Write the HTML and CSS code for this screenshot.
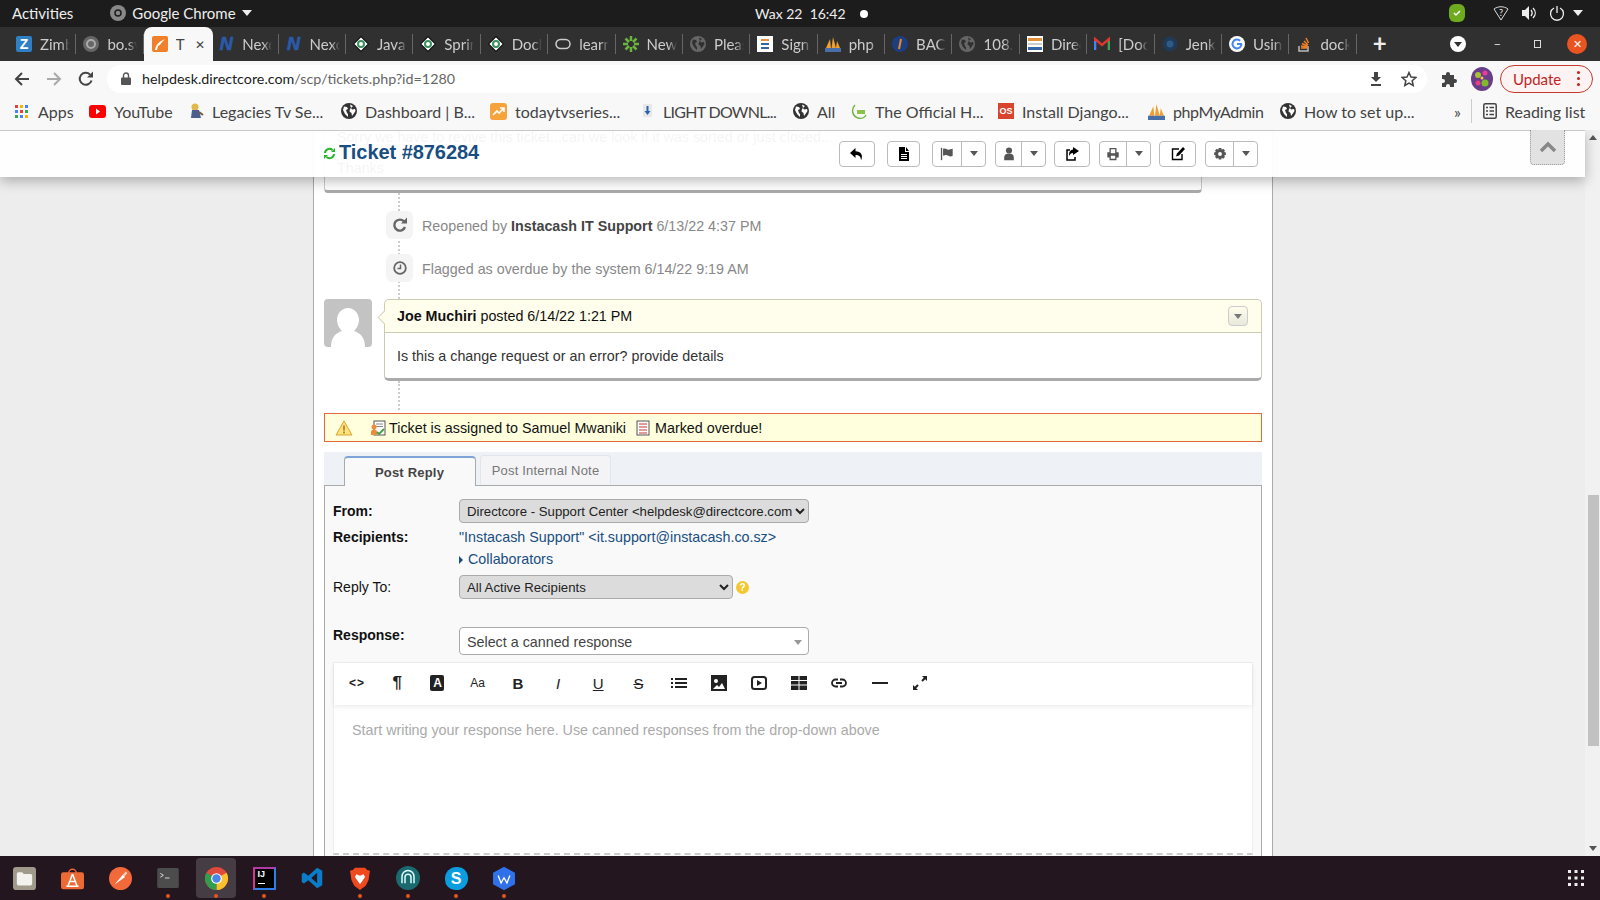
FILE: index.html
```html
<!DOCTYPE html>
<html lang="en">
<head>
  <meta charset="UTF-8">
  <title>Ticket #876284</title>
  <link rel="stylesheet" href="styles.css">
</head>
<body>
  <svg class="defs" width="0" height="0">
    <symbol id="i-globe" viewBox="0 0 16 16"><circle cx="8" cy="8" r="8"/><path style="fill: var(--land, #fff)" d="M3 3.500l3 .5 1 2-2 1 1 3 1 1v3L4 11 2 7zM9 1.500l3 1.500-2 2 1 1.500 3-.5.500 2-2 3-1.500 2-.5-3-2-1.500.5-2.500 1-1z"/></symbol>
    <symbol id="i-diamond" viewBox="0 0 16 16"><path fill="#fff" stroke="#111" stroke-width="1.200" d="M8 .5L15.500 8 8 15.500.5 8z"/><circle cx="8" cy="8" r="3" fill="none" stroke="#3d8f5f" stroke-width="2"/></symbol>
    <symbol id="i-pma" viewBox="0 0 16 16"><path fill="#f0a030" d="M1 12L5 3l1 9zM6.500 12L8 1l3 11zM11 12l1-7 3 7z"/><rect y="12" width="16" height="4" fill="#4a6ea8"/></symbol>
    <symbol id="i-reply" viewBox="0 0 16 16"><path d="M6.500 2L1 7l5.500 5V9c3.500 0 5.500 1.500 5.500 5.500C14.500 9 12 5.500 6.500 5.200z"/></symbol>
    <symbol id="i-doc" viewBox="0 0 16 16"><path fill-rule="evenodd" d="M3 1h6v5h4v9H3zM5 8v1h6V8zm0 2v1h6v-1zm0 2v1h6v-1z"/><path d="M10 1l3 4h-3z"/></symbol>
    <symbol id="i-flag" viewBox="0 0 16 16"><rect x="1" y="1" width="1.500" height="14"/><path d="M3.500 2c3-1 4 1 6 1s3-1 5-1v8c-2 1-3 1-5 0s-3-1-6 0z"/></symbol>
    <symbol id="i-user" viewBox="0 0 16 16"><circle cx="8" cy="4" r="3.500"/><path d="M2.500 15v-3c0-3 2-4.500 5.500-4.500s5.500 1.500 5.500 4.500v3z"/></symbol>
    <symbol id="i-share" viewBox="0 0 16 16"><path fill="none" stroke="currentColor" stroke-width="1.500" d="M6 4H3v10h8v-3"/><path d="M9 1l6 4-6 4V7c-2 0-3 1-4 3 0-4 1-6 4-6.500z"/></symbol>
    <symbol id="i-print" viewBox="0 0 16 16"><path fill-rule="evenodd" d="M4 1h8v5h2.500v6H12v3H4v-3H1.500V6H4zM5.500 2.500V7h5V2.500zM5.500 10v3.500h5V10z"/></symbol>
    <symbol id="i-edit" viewBox="0 0 16 16"><path fill="none" stroke="currentColor" stroke-width="1.400" d="M9 3H2.500v10.500H12V8"/><path d="M13 1l2 2-6 6.500-3 1 1-3z"/></symbol>
    <symbol id="i-cog" viewBox="0 0 16 16"><path fill-rule="evenodd" d="M6.500 1h3l.4 2 1.700-1 2.100 2.100-1 1.700 2 .4v3l-2 .4 1 1.700-2.100 2.100-1.700-1-.4 2h-3l-.4-2-1.700 1-2.100-2.100 1-1.700-2-.4v-3l2-.4-1-1.700L4.400 2l1.700 1zM8 5.800a2.200 2.200 0 100 4.400 2.200 2.200 0 000-4.400z"/></symbol>
  </svg>

  <div class="desktop">
    <header class="gnome-bar">
      <span class="activities">Activities</span>
      <span class="app-menu">
        <svg class="app-ico" width="16" height="16" viewBox="0 0 16 16"><circle cx="8" cy="8" r="8" fill="#888"/><circle cx="8" cy="8" r="3" fill="none" stroke="#1c1c1c" stroke-width="1.500"/></svg>
        Google Chrome <i class="caret-down"></i>
      </span>
      <span class="clock">Wax 22&nbsp;&nbsp;16:42 <i class="rec-dot"></i></span>
      <span class="tray">
        <svg class="tray-shield" width="16" height="20" viewBox="0 0 16 20"><rect y="1" width="16" height="18" rx="6" fill="#6eab1e"/><path d="M5 10l2 2 4-4" fill="none" stroke="#fff" stroke-width="1.500"/></svg>
        <svg class="tray-wifi" width="16" height="16" viewBox="0 0 16 16"><path d="M1 4c4-3 10-3 14 0L8 15z" fill="none" stroke="#ddd"/><text x="8" y="11" text-anchor="middle" font-size="9" fill="#eee">?</text></svg>
        <svg class="tray-vol" width="16" height="16" viewBox="0 0 16 16"><path d="M1 5h3l4-4v14l-4-4H1z" fill="#eee"/><path d="M10 5c1.500 2 1.500 4 0 6M12 3c3 3 3 7 0 10" fill="none" stroke="#eee" stroke-width="1.300"/></svg>
        <svg class="tray-power" width="16" height="16" viewBox="0 0 16 16"><path d="M5 3a6.500 6.500 0 106 0M8 1v7" fill="none" stroke="#eee" stroke-width="1.300"/></svg>
        <i class="caret-down"></i>
      </span>
    </header>

    <div class="tabstrip">
      <div class="tab"><span class="fav fav-zimbra">Z</span><span class="tab-title">Zimbra</span></div>
      <div class="tab"><svg class="fav" viewBox="0 0 16 16"><circle cx="8" cy="8" r="8" fill="#666"/><circle cx="8" cy="8" r="4" fill="none" stroke="#aaa" stroke-width="2"/></svg><span class="tab-title">bo.sw</span></div>
      <div class="tab tab-active"><svg class="fav" viewBox="0 0 16 16"><rect width="16" height="16" rx="2" fill="#f0802c"/><path d="M3 14c1-5 3-8 10-11-3 3-4 4-5 6l-2 1-1 4z" fill="#fff"/></svg><span class="tab-title">T</span><span class="tab-close">&#10005;</span></div>
      <div class="tab"><span class="fav fav-nexo">N</span><span class="tab-title">Nexo</span></div>
      <div class="tab"><span class="fav fav-nexo">N</span><span class="tab-title">Nexo</span></div>
      <div class="tab"><svg class="fav"><use href="#i-diamond"/></svg><span class="tab-title">Java</span></div>
      <div class="tab"><svg class="fav"><use href="#i-diamond"/></svg><span class="tab-title">Sprin</span></div>
      <div class="tab"><svg class="fav"><use href="#i-diamond"/></svg><span class="tab-title">Docl</span></div>
      <div class="tab"><svg class="fav" viewBox="0 0 16 16"><rect x="1" y="3.500" width="14" height="9" rx="4.500" fill="none" stroke="#ccc" stroke-width="1.500"/></svg><span class="tab-title">learn</span></div>
      <div class="tab"><svg class="fav" viewBox="0 0 16 16"><path d="M8 0v5M8 11v5M0 8h5M11 8h5M2.500 2.500L6 6M10 10l3.500 3.500M13.500 2.500L10 6M6 10l-3.500 3.500" stroke="#6cb33f" stroke-width="2.500"/></svg><span class="tab-title">New</span></div>
      <div class="tab"><svg class="fav fav-gray"><use href="#i-globe"/></svg><span class="tab-title">Pleas</span></div>
      <div class="tab"><svg class="fav" viewBox="0 0 16 16"><rect width="16" height="16" fill="#fff"/><path d="M4 4h8" stroke="#e69138" stroke-width="2"/><path d="M4 8h8M4 12h8" stroke="#3367a5" stroke-width="2"/></svg><span class="tab-title">Sign</span></div>
      <div class="tab"><svg class="fav"><use href="#i-pma"/></svg><span class="tab-title">php</span></div>
      <div class="tab"><svg class="fav" viewBox="0 0 16 16"><circle cx="8" cy="8" r="8" fill="#1d3f80"/><path d="M9 3L7 13" stroke="#e8872b" stroke-width="2"/></svg><span class="tab-title">BAC</span></div>
      <div class="tab"><svg class="fav fav-gray"><use href="#i-globe"/></svg><span class="tab-title">108.1</span></div>
      <div class="tab"><svg class="fav" viewBox="0 0 16 16"><rect width="16" height="16" fill="#fff"/><rect x="1" y="2" width="14" height="3" fill="#e69138"/><rect x="1" y="7" width="14" height="2" fill="#ccc"/><rect x="1" y="11" width="14" height="3" fill="#3367a5"/></svg><span class="tab-title">Direc</span></div>
      <div class="tab"><svg class="fav" viewBox="0 0 16 16"><path d="M1 14V3l7 6 7-6v11" fill="none" stroke="#e3352b" stroke-width="2.400"/><path d="M1 14V5" stroke="#4285f4" stroke-width="2.400"/><path d="M15 14V5" stroke="#34a853" stroke-width="2.400"/></svg><span class="tab-title">[Doc</span></div>
      <div class="tab"><svg class="fav" viewBox="0 0 16 16"><circle cx="8" cy="8" r="7.500" fill="#203a56"/><circle cx="8" cy="8" r="3.500" fill="#2e5a86"/></svg><span class="tab-title">Jenk</span></div>
      <div class="tab"><svg class="fav" viewBox="0 0 16 16"><circle cx="8" cy="8" r="8" fill="#fff"/><path d="M12.500 8a4.500 4.500 0 11-1.300-3.200" fill="none" stroke="#4285f4" stroke-width="2"/><path d="M8 8h5" stroke="#4285f4" stroke-width="2"/></svg><span class="tab-title">Usin</span></div>
      <div class="tab"><svg class="fav" viewBox="0 0 16 16"><path d="M3 10v5h9v-5" fill="none" stroke="#bbb" stroke-width="1.500"/><path d="M5 12h6M5 10l6 1M6 7.500l5.500 2.500M8 5l4 4M10 2l2.500 5" stroke="#f48024" stroke-width="1.500"/></svg><span class="tab-title">dock</span></div>
      <span class="new-tab">+</span>
      <span class="win-controls">
        <span class="tab-search"><i></i></span>
        <span class="win-btn">&#8211;</span>
        <span class="win-restore"></span>
        <span class="win-close">&#10005;</span>
      </span>
    </div>

    <div class="toolbar">
      <svg class="nav-ico" width="16" height="16" viewBox="0 0 16 16"><path d="M15 8H2M8 2L2 8l6 6" fill="none" stroke="#444" stroke-width="2"/></svg>
      <svg class="nav-ico nav-off" width="16" height="16" viewBox="0 0 16 16"><path d="M1 8h13M8 2l6 6-6 6" fill="none" stroke="#aaa" stroke-width="2"/></svg>
      <svg class="nav-ico" width="16" height="16" viewBox="0 0 16 16"><path d="M13.500 9.500A6 6 0 1112 3.500" fill="none" stroke="#444" stroke-width="2"/><path d="M9 6.500h6v-6z" fill="#444"/></svg>
      <div class="omnibox">
        <svg class="lock" width="10" height="13" viewBox="0 0 10 13"><path d="M2.500 6V3.500a2.500 2.500 0 015 0V6" fill="none" stroke="#555" stroke-width="1.400"/><rect y="5.500" width="10" height="7.500" rx="1" fill="#555"/></svg>
        <span class="url"><b>helpdesk.directcore.com</b>/scp/tickets.php?id=1280</span>
        <svg class="omni-ico" width="14" height="14" viewBox="0 0 14 14"><path d="M5 0h4v5h3L7 10 2 5h3zM2 12h10v2H2z" fill="#444"/></svg>
        <svg class="omni-ico" width="16" height="16" viewBox="0 0 16 16"><path d="M8 1.500l2 4.500 4.800.5-3.600 3.200 1 4.800L8 12.100l-4.200 2.400 1-4.800L1.200 6.500 6 6z" fill="none" stroke="#444" stroke-width="1.500"/></svg>
      </div>
      <svg class="puzzle" width="16" height="16" viewBox="0 0 16 16"><path d="M1 4h4V3a2 2 0 014 0v1h4v4h1a2 2 0 010 4h-1v4H9v-1a2 2 0 00-4 0v1H1v-4h1a2 2 0 000-4H1z" fill="#444"/></svg>
      <svg class="profile" width="22" height="24" viewBox="0 0 22 24"><ellipse cx="11" cy="12" rx="11" ry="12" fill="#6a3d8a"/><circle cx="7" cy="8" r="3" fill="#a5c22f"/><circle cx="14" cy="6" r="2.500" fill="#e83d9a"/><circle cx="14" cy="16" r="3.500" fill="#7fb92c"/><circle cx="7" cy="16" r="2.500" fill="#e5417f"/><circle cx="11" cy="11" r="1.500" fill="#f0d040"/></svg>
      <div class="update-pill"><span>Update</span><i class="kebab"></i></div>
    </div>

    <nav class="bookmarks">
      <span class="bm bm-apps"><svg class="bm-ico" width="13" height="13" viewBox="0 0 13 13"><path d="M0 0h3v3H0z" fill="#e34133"/><path d="M5 0h3v3H5z" fill="#f4b400"/><path d="M10 0h3v3h-3z" fill="#4285f4"/><path d="M0 5h3v3H0z" fill="#4285f4"/><path d="M5 5h3v3H5z" fill="#e34133"/><path d="M10 5h3v3h-3z" fill="#34a853"/><path d="M0 10h3v3H0z" fill="#34a853"/><path d="M5 10h3v3H5z" fill="#4285f4"/><path d="M10 10h3v3h-3z" fill="#f4b400"/></svg>Apps</span>
      <span class="bm bm-yt"><svg class="bm-ico" width="17" height="13" viewBox="0 0 17 13"><rect width="17" height="13" rx="3" fill="#f00"/><path d="M7 3.500l4 3-4 3z" fill="#fff"/></svg>YouTube</span>
      <span class="bm bm-leg"><svg class="bm-ico" width="16" height="16" viewBox="0 0 16 16"><circle cx="7" cy="4" r="3.500" fill="#e0b84a"/><path d="M4 7h7l2 8H3z" fill="#4a5f8f"/><path d="M11 9l4 3" stroke="#7a5a3a" stroke-width="2"/></svg>Legacies Tv Se...</span>
      <span class="bm bm-dash"><svg class="bm-ico bm-globe" width="16" height="16"><use href="#i-globe"/></svg>Dashboard | B...</span>
      <span class="bm bm-today"><svg class="bm-ico" width="17" height="17" viewBox="0 0 17 17"><rect width="17" height="17" rx="3" fill="#f5a33a"/><path d="M3 12l4-4 2 2 5-5M10 5h4v4" fill="none" stroke="#fff" stroke-width="1.600"/></svg>todaytvseries...</span>
      <span class="bm bm-light"><svg class="bm-ico" width="15" height="16" viewBox="0 0 15 16"><rect x="3" y="1" width="9" height="13" rx="1" fill="#e8e8e8"/><path d="M6.500 3h2v5h2l-3 4-3-4h2z" fill="#2a64b0"/></svg>LIGHT DOWNL...</span>
      <span class="bm bm-all"><svg class="bm-ico bm-globe" width="16" height="16"><use href="#i-globe"/></svg>All</span>
      <span class="bm bm-yts"><svg class="bm-ico" width="16" height="16" viewBox="0 0 16 16"><path d="M4 2C0 6 1 13 7 15c4 1 7-1 8-3" fill="none" stroke="#6cb33f" stroke-width="1.400"/><path d="M6 7h8v4H6z" fill="#8cc24a"/></svg>The Official H...</span>
      <span class="bm bm-os"><span class="bm-ico bm-osbox">OS</span>Install Django...</span>
      <span class="bm bm-pma"><svg class="bm-ico" width="17" height="17"><use href="#i-pma"/></svg>phpMyAdmin</span>
      <span class="bm bm-how"><svg class="bm-ico bm-globe" width="16" height="16"><use href="#i-globe"/></svg>How to set up...</span>
      <span class="bm-more">&raquo;</span>
      <span class="bm bm-read"><svg class="bm-ico" width="14" height="16" viewBox="0 0 14 16"><rect x=".8" y=".8" width="12.400" height="14.400" rx="1.500" fill="none" stroke="#444" stroke-width="1.500"/><path d="M3 4.500h2M3 8h2M3 11.500h2M6.500 4.500h4.500M6.500 8h4.500M6.500 11.500h4.500" stroke="#444" stroke-width="1.300"/></svg>Reading list</span>
    </nav>

    <main class="viewport">
      <div class="page">
        <div class="content">
          <div class="prev-card">
            <p>Sorry we have to revive this ticket...can we look if it was sorted or just closed...</p>
            <p>Thanks</p>
          </div>

          <div class="events">
            <div class="event">
              <span class="event-ico"><svg width="16" height="16" viewBox="0 0 16 16"><path d="M13 10a5.500 5.500 0 11-1-5.500" fill="none" stroke="#666" stroke-width="2.400"/><path d="M9 6.500h6v-6z" fill="#666"/></svg></span>
              <span class="event-text">Reopened by <b>Instacash IT Support</b> 6/13/22 4:37 PM</span>
            </div>
            <div class="event">
              <span class="event-ico"><svg width="14" height="14" viewBox="0 0 14 14"><circle cx="7" cy="7" r="5.800" fill="none" stroke="#666" stroke-width="1.800"/><path d="M7.500 3.500v4H4.500" fill="none" stroke="#666" stroke-width="1.500"/></svg></span>
              <span class="event-text">Flagged as overdue by the system 6/14/22 9:19 AM</span>
            </div>
          </div>

          <div class="entry">
            <svg class="avatar" width="48" height="48" viewBox="0 0 48 48"><rect width="48" height="48" rx="4" fill="#c3c3c3"/><path d="M24 9c6 0 11 5 11 12 0 5-3 9-5 11 6 2 11 6 11 16H7c0-10 5-14 11-16-2-2-5-6-5-11 0-7 5-12 11-12z" fill="#fff"/></svg>
            <div class="entry-card">
              <div class="entry-head">
                <span><b>Joe Muchiri</b> posted 6/14/22 1:21 PM</span>
                <span class="entry-menu"><i></i></span>
              </div>
              <div class="entry-body">Is this a change request or an error? provide details</div>
            </div>
          </div>
          <div class="connector"></div>

          <div class="notice">
            <svg class="notice-warn" width="18" height="16" viewBox="0 0 18 16"><path d="M9 1l8 14H1z" fill="#fbe27a" stroke="#d9a43a"/><path d="M9 5.500v5M9 11.500v2" stroke="#a8741a" stroke-width="1.500"/></svg>
            <svg class="notice-ico" width="16" height="16" viewBox="0 0 16 16"><rect x="4" y="1" width="11" height="14" fill="#fff" stroke="#555"/><path d="M6 4h7M6 6.500h7" stroke="#888"/><circle cx="4" cy="7" r="2.500" fill="#ee8a3c"/><path d="M1 15v-3c0-1.500 1-2.500 3-2.500s3 1 3 2.500v3z" fill="#ee8a3c"/><path d="M7 12l2 2 5-5" fill="none" stroke="#3fa142" stroke-width="1.800"/></svg>
            <span>Ticket is assigned to Samuel Mwaniki</span>
            <svg class="notice-ico notice-ico2" width="14" height="16" viewBox="0 0 14 16"><rect x="1" y="1" width="12" height="14" fill="#fff" stroke="#555"/><path d="M3 4h8M3 7h8M3 10h8M3 13h8" stroke="#c0392b"/></svg>
            <span>Marked overdue!</span>
          </div>

          <div class="reply-tabs">
            <span class="reply-tab reply-tab-on">Post Reply</span>
            <span class="reply-tab">Post Internal Note</span>
          </div>

          <form class="reply-form">
            <div class="row row-from">
              <label class="lbl"><b>From:</b></label>
              <select class="sel sel-from"><option>Directcore - Support Center &lt;helpdesk@directcore.com</option></select>
            </div>
            <div class="row row-rcpt">
              <label class="lbl"><b>Recipients:</b></label>
              <a class="link">"Instacash Support" &lt;it.support@instacash.co.sz&gt;</a>
            </div>
            <div class="row row-collab">
              <span class="lbl"></span>
              <a class="link"><i class="caret-right"></i>Collaborators</a>
            </div>
            <div class="row row-replyto">
              <label class="lbl">Reply To:</label>
              <select class="sel sel-reply"><option>All Active Recipients</option></select>
              <span class="help-dot">?</span>
            </div>
            <div class="row row-response">
              <label class="lbl"><b>Response:</b></label>
              <div class="canned">Select a canned response<i></i></div>
            </div>

            <div class="editor">
              <div class="editor-bar">
                <span class="ed-btn ed-code">&lt;&gt;</span>
                <span class="ed-btn ed-para">&para;</span>
                <span class="ed-btn"><span class="ed-a">A</span></span>
                <span class="ed-btn ed-aa">Aa</span>
                <span class="ed-btn ed-b">B</span>
                <span class="ed-btn ed-i">I</span>
                <span class="ed-btn ed-u">U</span>
                <span class="ed-btn ed-s">S</span>
                <span class="ed-btn"><svg width="16" height="12" viewBox="0 0 16 12"><path d="M0 1h2v2H0zM4 1h12v2H4zM0 5h2v2H0zM4 5h12v2H4zM0 9h2v2H0zM4 9h12v2H4z" fill="#222"/></svg></span>
                <span class="ed-btn"><svg width="16" height="16" viewBox="0 0 16 16"><rect width="16" height="16" fill="#222"/><circle cx="5" cy="6" r="2" fill="#fff"/><path d="M2 14l4-4 2 2 3-4 3 6z" fill="#fff"/></svg></span>
                <span class="ed-btn"><svg width="16" height="14" viewBox="0 0 16 14"><rect x="1" y="1" width="14" height="12" rx="2.500" fill="none" stroke="#222" stroke-width="2"/><path d="M6 4l5 3-5 3z" fill="#222"/></svg></span>
                <span class="ed-btn"><svg width="16" height="14" viewBox="0 0 16 14"><path d="M0 0h16v14H0z" fill="#222"/><path d="M0 4.500h16M0 9h16M8 0v14" stroke="#fff"/></svg></span>
                <span class="ed-btn"><svg width="16" height="10" viewBox="0 0 16 10"><path d="M7 1.500H4.500a3.500 3.500 0 000 7H7M9 1.500h2.500a3.500 3.500 0 010 7H9M5 5h6" fill="none" stroke="#222" stroke-width="1.800"/></svg></span>
                <span class="ed-btn"><svg width="16" height="2" viewBox="0 0 16 2"><rect width="16" height="2" fill="#222"/></svg></span>
                <span class="ed-btn"><svg width="16" height="16" viewBox="0 0 16 16"><path d="M10 1h5v5l-1.800-1.800-2.500 2.500-1.400-1.400 2.500-2.500zM6 15H1v-5l1.800 1.800 2.500-2.500 1.400 1.400-2.500 2.500z" fill="#222"/></svg></span>
              </div>
              <div class="editor-body">Start writing your response here. Use canned responses from the drop-down above</div>
            </div>
          </form>
        </div>
      </div>

      <div class="scrollbar">
        <i class="sb-up"></i>
        <div class="sb-thumb"></div>
        <i class="sb-down"></i>
      </div>

      <!-- sticky ticket header sits over the scrolled page -->
      <div class="sticky-head">
        <svg class="refresh" width="13" height="13" viewBox="0 0 13 13"><path d="M2 6a4.500 4.500 0 017.500-3M11 7a4.500 4.500 0 01-7.500 3" fill="none" stroke="#27b327" stroke-width="2"/><path d="M8 5h4V1zM5 8H1v4z" fill="#27b327"/></svg>
        <h1 class="ticket-no">Ticket #876284</h1>
        <div class="actions">
          <span class="act act-reply"><svg width="16" height="16"><use href="#i-reply"/></svg></span>
          <span class="act act-doc"><svg width="16" height="16"><use href="#i-doc"/></svg></span>
          <span class="act act-split act-flag"><span class="act-main act-gray"><svg width="14" height="14"><use href="#i-flag"/></svg></span><span class="act-more"><i></i></span></span>
          <span class="act act-split act-user"><span class="act-main act-gray"><svg width="14" height="14"><use href="#i-user"/></svg></span><span class="act-more"><i></i></span></span>
          <span class="act act-share"><svg width="16" height="16"><use href="#i-share"/></svg></span>
          <span class="act act-split act-print"><span class="act-main act-gray"><svg width="14" height="14"><use href="#i-print"/></svg></span><span class="act-more"><i></i></span></span>
          <span class="act act-edit"><svg width="16" height="16"><use href="#i-edit"/></svg></span>
          <span class="act act-split act-cog"><span class="act-main act-gray"><svg width="14" height="14"><use href="#i-cog"/></svg></span><span class="act-more"><i></i></span></span>
        </div>
        <span class="to-top"><svg width="18" height="12" viewBox="0 0 18 12"><path d="M2 10l7-7 7 7" fill="none" stroke="#888" stroke-width="3.500"/></svg></span>
      </div>
    </main>

    <footer class="dock">
      <span class="dock-app"><svg width="23" height="23" viewBox="0 0 30 30"><rect width="30" height="30" rx="4" fill="#a09a8c"/><path d="M5 9c0-1 1-2 2-2h5l2 2h9c1 0 2 1 2 2v11c0 1-1 2-2 2H7c-1 0-2-1-2-2z" fill="#f4f2ee"/></svg></span>
      <span class="dock-app"><svg width="23" height="23" viewBox="0 0 30 30"><path d="M10 8a5 5 0 0110 0" fill="none" stroke="#f0632c" stroke-width="2"/><rect y="7" width="30" height="22" rx="3" fill="#ee6a34"/><path d="M15 9l-6 16M15 9l6 16M11 19h8M7 25h16" stroke="#fff" stroke-width="2" fill="none"/></svg></span>
      <span class="dock-app"><svg width="23" height="23" viewBox="0 0 30 30"><circle cx="15" cy="15" r="15" fill="#f36a3a"/><path d="M7 23l11-13 3 3z" fill="#fff"/><path d="M18 10l4-4 2 2-4 4z" fill="#fbd3c2"/></svg></span>
      <span class="dock-app has-dot"><svg width="22" height="20" viewBox="0 0 28 26"><rect width="28" height="26" rx="2" fill="#4c4c4c"/><path d="M4 7l4 2.500L4 12" fill="none" stroke="#fff"/><path d="M10 13h6" stroke="#fff"/></svg></span>
      <span class="dock-app dock-active has-dot"><svg width="23" height="23" viewBox="0 0 30 30"><circle cx="15" cy="15" r="15" fill="#e04a3a"/><path d="M15 15l13-7.500A15 15 0 0115 30z" fill="#fbc02d"/><path d="M15 15L2 22.500A15 15 0 0015 30z" fill="#2f9e4f"/><path d="M15 15L2 22.500A15 15 0 012 7.500z" fill="#2f9e4f"/><circle cx="15" cy="15" r="7" fill="#fff"/><circle cx="15" cy="15" r="5.500" fill="#4a86e8"/></svg></span>
      <span class="dock-app has-dot"><span class="ij-box"><b>IJ</b><i></i></span></span>
      <span class="dock-app"><svg width="22" height="22" viewBox="0 0 30 30"><path d="M22 1l7 4v20l-7 4-12-11-6 4.500-3-2v-11l3-2 6 4.500z" fill="#0a7cc8"/><path d="M22 8v14l-8-7z" fill="#23161f"/></svg></span>
      <span class="dock-app has-dot"><svg width="20" height="25" viewBox="0 0 28 32"><path d="M7 1h14l3 3 4 1-2 13-4 8-8 6-8-6-4-8L0 5l4-1z" fill="#f1491f"/><path d="M9 10l5 2 5-2 2 4-4 6-3 4-3-4-4-6z" fill="#fff"/></svg></span>
      <span class="dock-app has-dot"><svg width="24" height="24" viewBox="0 0 32 32"><circle cx="16" cy="16" r="16" fill="#1b6a70"/><path d="M8 23v-9a8 8 0 0116 0v9M12 15a4 4 0 018 0v8M12 15v8" fill="none" stroke="#dff" stroke-width="2"/></svg></span>
      <span class="dock-app has-dot"><span class="skype-box">S</span></span>
      <span class="dock-app has-dot"><svg width="22" height="25" viewBox="0 0 30 32"><path d="M15 0l15 8v16l-15 8-15-8V8z" fill="#2f71e8"/><path d="M7 12l4 10 4-7 4 7 4-10" fill="none" stroke="#fff" stroke-width="1.800"/></svg></span>
      <svg class="app-grid" width="16" height="16" viewBox="0 0 16 16"><path d="M0 0h3v3H0zM6.500 0h3v3h-3zM13 0h3v3h-3zM0 6.500h3v3H0zM6.500 6.500h3v3h-3zM13 6.500h3v3h-3zM0 13h3v3H0zM6.500 13h3v3h-3zM13 13h3v3h-3z" fill="#eee"/></svg>
    </footer>
  </div>
</body>
</html>
```

FILE: styles.css
```css
* {
  box-sizing: border-box;
}

body {
  margin: 0;
  overflow: hidden;
  font-family: "Liberation Sans", sans-serif;
  font-size: 14.3px;
}

.defs {
  position: absolute;
}

.desktop {
  width: 1600px;
  height: 900px;
  display: flex;
  flex-direction: column;
  overflow: hidden;
}

/* gnome top bar */
.gnome-bar {
  height: 27px;
  flex: none;
  background: #1c1c1c;
  color: #eee;
  font-family: Lato, sans-serif;
  font-size: 15px;
  display: flex;
  align-items: center;
  padding: 0 0 1px 12px;
  position: relative;
}

.app-menu {
  margin-left: 37px;
  display: flex;
  align-items: center;
}

.app-ico {
  margin-right: 6px;
}

.caret-down {
  display: inline-block;
  width: 0;
  height: 0;
  border-left: 5px solid transparent;
  border-right: 5px solid transparent;
  border-top: 6px solid #eee;
  margin-left: 6px;
}

.clock {
  position: absolute;
  left: 755px;
  font-size: 14px;
}

.rec-dot {
  display: inline-block;
  width: 8px;
  height: 8px;
  border-radius: 50%;
  background: #fff;
  margin-left: 11px;
  vertical-align: 1px;
}

.tray {
  margin-left: auto;
  display: flex;
  align-items: center;
  padding-right: 17px;
}

.tray-wifi,
.tray-vol,
.tray-power {
  margin-left: 12px;
}

.tray-wifi {
  margin-left: 28px;
}

.tray .caret-down {
  margin-left: 8px;
}

/* tabs */
.tabstrip {
  height: 34px;
  flex: none;
  background: #303030;
  color: #ccc;
  font-family: Lato, sans-serif;
  font-size: 15px;
  display: flex;
  align-items: stretch;
  padding-left: 9px;
}

.tab {
  width: 67.4px;
  flex: none;
  display: flex;
  align-items: center;
  padding-left: 7px;
  position: relative;
}

.tab::after {
  content: "";
  position: absolute;
  right: 0;
  top: 7px;
  bottom: 7px;
  width: 1px;
  background: #666;
}

.tab-active {
  width: 69px;
  margin-right: -1.6px;
  padding-left: 8px;
  background: #f8f8f8;
  color: #444;
  border-radius: 8px 8px 0 0;
}

.tab-active::after {
  display: none;
}

.fav {
  width: 16px;
  height: 16px;
  flex: none;
  display: inline-block;
}

.fav-gray {
  --land: #303030;
  color: #666;
  fill: #666;
}

.fav-zimbra {
  background: #2f7fc4;
  color: #fff;
  font: bold 14px/16px "Liberation Sans", sans-serif;
  text-align: center;
  border-radius: 2px;
}

.fav-nexo {
  color: #2a5aa8;
  font: italic bold 18px/16px "Liberation Sans", sans-serif;
  -webkit-text-stroke: .7px #2a5aa8;
  text-align: center;
}

.tab-title {
  margin-left: 8px;
  width: 30px;
  overflow: hidden;
  white-space: nowrap;
  -webkit-mask-image: linear-gradient(to right, #000 70%, transparent);
  mask-image: linear-gradient(to right, #000 70%, transparent);
}

.tab-active .tab-title {
  width: 12px;
  -webkit-mask-image: none;
  mask-image: none;
}

.tab-close {
  margin-left: 7px;
  font-size: 12px;
  color: #444;
}

.new-tab {
  margin-left: 16px;
  color: #eee;
  font-size: 24px;
  line-height: 32px;
  font-weight: 700;
}

.win-controls {
  margin-left: auto;
  display: flex;
  align-items: center;
  color: #ddd;
}

.tab-search {
  width: 16px;
  height: 16px;
  border-radius: 50%;
  background: #fff;
  display: flex;
  align-items: center;
  justify-content: center;
  margin-right: 27px;
}

.tab-search i {
  border-left: 4px solid transparent;
  border-right: 4px solid transparent;
  border-top: 5px solid #303030;
}

.win-btn {
  font-size: 13px;
  margin-right: 33px;
}

.win-restore {
  width: 7px;
  height: 8px;
  border: 1px solid #ddd;
  margin-right: 26px;
}

.win-close {
  width: 20px;
  height: 20px;
  border-radius: 50%;
  background: #e95420;
  color: #fff;
  font-size: 11px;
  line-height: 20px;
  text-align: center;
  margin-right: 13px;
}

/* address bar */
.toolbar {
  height: 35px;
  flex: none;
  background: #f8f8f8;
  display: flex;
  align-items: center;
  padding-left: 14px;
  font-family: Lato, sans-serif;
}

.nav-ico {
  margin-right: 16px;
}

.omnibox {
  width: 1320px;
  margin-left: -3px;
  height: 28px;
  border-radius: 14px;
  background: #fff;
  display: flex;
  align-items: center;
  padding-left: 14px;
}

.lock {
  margin-right: 11px;
}

.url {
  font-size: 14.3px;
  color: #666;
  flex: 1;
}

.url b {
  font-weight: 400;
  color: #222;
}

.omni-ico {
  margin-right: 18px;
}

.omni-ico:last-child {
  margin-right: 10px;
}

.puzzle {
  margin-left: 14px;
}

.profile {
  margin-left: 14px;
}

.update-pill {
  margin-left: 7px;
  width: 93px;
  height: 28px;
  border: 1px solid #c5392f;
  border-radius: 14px;
  background: #fdf3f2;
  color: #c5221f;
  font-size: 15px;
  display: flex;
  align-items: center;
  padding-left: 12px;
}

.kebab {
  margin-left: auto;
  margin-right: 12px;
  width: 3px;
  height: 3px;
  border-radius: 50%;
  background: #c5221f;
  box-shadow: 0 -6px 0 #c5221f, 0 6px 0 #c5221f;
}

/* bookmarks */
.bookmarks {
  height: 34px;
  flex: none;
  background: #f8f8f8;
  color: #444;
  font-family: Lato, sans-serif;
  font-size: 16px;
  display: flex;
  align-items: center;
  padding: 0 0 4px 15px;
}

.bm {
  display: flex;
  align-items: center;
  flex: none;
  white-space: nowrap;
}

.bm-ico {
  margin-right: 8px;
  flex: none;
}

.bm-globe {
  fill: #333;
}

.bm-apps { width: 74px; }
.bm-apps .bm-ico { margin-right: 10px; }
.bm-yt { width: 99px; }
.bm-leg { width: 153px; }
.bm-dash { width: 149px; }
.bm-today { width: 150px; }
.bm-light { width: 153px; letter-spacing: -.7px; }
.bm-all { width: 58px; }
.bm-yts { width: 147px; }
.bm-os { width: 150px; }
.bm-pma { width: 132px; letter-spacing: -.4px; }
.bm-how { width: 174px; }

.bm-osbox {
  width: 16px;
  height: 16px;
  background: #d9442f;
  color: #fff;
  font: bold 9px/16px "Liberation Sans", sans-serif;
  text-align: center;
}

.bm-more {
  font-size: 16px;
  width: 14px;
}

.bm-read {
  border-left: 1px solid #ccc;
  padding-left: 11px;
  margin-left: 3px;
  height: 24px;
}

/* page area */
.viewport {
  flex: 1;
  min-height: 0;
  display: flex;
  position: relative;
  overflow: hidden;
}

.page {
  flex: 1;
  background: #ededed;
  padding-left: 313px;
  overflow: hidden;
}

.content {
  width: 960px;
  min-height: 100%;
  background: #fff;
  border-left: 1px solid #aaa;
  border-right: 1px solid #aaa;
  padding: 0 10px;
}

.prev-card {
  width: 878px;
  height: 63px;
  border: 1px solid #ccc;
  border-top: 0;
  border-bottom: 3px solid #aaa;
  border-radius: 0 0 4px 4px;
  padding: 0 12px;
  color: #333;
  line-height: 31px;
  overflow: hidden;
}

.prev-card p {
  margin: 0;
}

.prev-card p:first-child {
  margin-top: -8px;
}

.events {
  margin-left: 74px;
  padding-top: 18px;
  height: 106px;
  border-left: 2px dotted #ccc;
}

.event {
  display: flex;
  align-items: center;
  height: 28px;
  margin-left: -14px;
  margin-bottom: 15px;
  color: #888;
}

.event b {
  color: #444;
}

.event-ico {
  width: 27px;
  height: 28px;
  border-radius: 6px;
  background: #f4f4f4;
  display: flex;
  align-items: center;
  justify-content: center;
  margin-right: 9px;
}

.event-text {
  padding-top: 2px;
}

.entry {
  display: flex;
  align-items: flex-start;
}

.avatar {
  flex: none;
  margin-right: 12px;
}

.entry-card {
  flex: 1;
  height: 82px;
  border: 1px solid #ccccb4;
  border-bottom: 3px solid #aaa;
  border-radius: 5px;
  position: relative;
}

.entry-card::before {
  content: "";
  position: absolute;
  left: -7px;
  top: 11px;
  width: 12px;
  height: 12px;
  background: #fffeec;
  border-left: 1px solid #ccccb4;
  border-bottom: 1px solid #ccccb4;
  transform: rotate(45deg) scale(.75);
}

.entry-head {
  height: 33px;
  background: #fffeec;
  border-bottom: 1px solid #ccccb4;
  border-radius: 5px 5px 0 0;
  display: flex;
  align-items: center;
  justify-content: space-between;
  padding: 0 13px 0 12px;
  color: #111;
}

.entry-menu {
  width: 20px;
  height: 20px;
  border: 1px solid #ccc;
  border-radius: 4px;
  background: linear-gradient(#fffeec, #e8e8dc);
  display: flex;
  align-items: center;
  justify-content: center;
}

.entry-menu i {
  border-left: 4px solid transparent;
  border-right: 4px solid transparent;
  border-top: 5px solid #777;
}

.entry-body {
  padding: 15px 12px;
  color: #333;
}

.connector {
  margin-left: 74px;
  height: 29px;
  border-left: 2px dotted #ccc;
}

.notice {
  margin-top: 3px;
  height: 29px;
  background: #ffd;
  border: 1px solid #e36a3b;
  display: flex;
  align-items: center;
  padding-left: 10px;
  color: #111;
}

.notice-warn {
  margin-right: 17px;
}

.notice-ico {
  margin-right: 3px;
}

.notice-ico2 {
  margin-left: 10px;
  margin-right: 5px;
}

.reply-tabs {
  margin-top: 10px;
  height: 33px;
  background: #eef1f6;
  display: flex;
  align-items: flex-end;
  padding-left: 20px;
  position: relative;
}

.reply-tab {
  width: 131px;
  height: 29px;
  margin-right: 4px;
  margin-bottom: 1px;
  background: #f4f4f6;
  border: 1px solid #e2e6ec;
  border-bottom: 0;
  border-radius: 4px 4px 0 0;
  color: #777;
  font-size: 13px;
  line-height: 30px;
  text-align: center;
  letter-spacing: .2px;
}

.reply-tab-on {
  width: 132px;
  height: 30px;
  margin-bottom: -1px;
  background: #f9f9f9;
  border: 1px solid #aaa;
  border-top: 2px solid #7fa4d8;
  border-bottom: 0;
  color: #444;
  font-weight: 700;
  line-height: 29px;
  padding-right: 1px;
  position: relative;
}

.reply-form {
  height: 400px;
  background: #f9f9f9;
  border: 1px solid #aaa;
  padding: 13px 8px 0;
}

.row {
  display: flex;
  align-items: center;
}

.lbl {
  width: 126px;
  flex: none;
  color: #111;
  font-size: 14px;
}

.row-from { height: 24px; }
.row-rcpt { height: 18px; margin-top: 5px; }
.row-collab { height: 18px; margin-top: 4px; }
.row-replyto { height: 24px; margin-top: 7px; }
.row-response { height: 28px; margin-top: 28px; }

.row-response .lbl {
  align-self: flex-start;
  line-height: 16px;
}

.sel {
  height: 24px;
  background: #dcdcdc;
  border: 1px solid #aaa;
  border-radius: 4px;
  color: #222;
  font: 13.2px "Liberation Sans", sans-serif;
  padding-left: 3px;
}

.sel-from {
  width: 350px;
}

.sel-reply {
  width: 274px;
}

.link {
  color: #184e81;
}

.caret-right {
  display: inline-block;
  border-top: 4px solid transparent;
  border-bottom: 4px solid transparent;
  border-left: 4px solid #184e81;
  margin-right: 5px;
}

.help-dot {
  width: 13px;
  height: 13px;
  margin-left: 3px;
  border-radius: 50%;
  background: #f5c72f;
  color: #fff;
  font-size: 10px;
  font-weight: 700;
  line-height: 13px;
  text-align: center;
}

.canned {
  width: 350px;
  height: 28px;
  background: #fff;
  border: 1px solid #aaa;
  border-radius: 4px;
  color: #444;
  line-height: 28px;
  padding-left: 7px;
  position: relative;
}

.canned i {
  position: absolute;
  right: 6px;
  top: 12px;
  border-left: 4px solid transparent;
  border-right: 4px solid transparent;
  border-top: 5px solid #999;
}

.editor {
  margin-top: 7px;
  width: 920px;
  height: 193px;
  background: #fff;
  border: 1px solid #eee;
  border-bottom: 2px dashed #ccc;
}

.editor-bar {
  height: 42px;
  display: flex;
  align-items: center;
  padding: 0 0 2px 3px;
  box-shadow: 0 2px 5px rgba(0, 0, 0, .08);
}

.ed-btn {
  width: 40.2px;
  flex: none;
  display: flex;
  align-items: center;
  justify-content: center;
  color: #222;
  font: 14px "Liberation Sans", sans-serif;
}

.ed-code { font: bold 12px "Liberation Sans", sans-serif; letter-spacing: 1px; }
.ed-para { font-size: 17px; font-weight: 700; }
.ed-aa { font-size: 12px; }
.ed-b { font-weight: 700; font-size: 15px; }
.ed-i { font-style: italic; font-size: 15px; }
.ed-u { text-decoration: underline; font-size: 15px; }
.ed-s { text-decoration: line-through; font-size: 15px; }

.ed-a {
  width: 14px;
  height: 16px;
  border-radius: 2px;
  background: #222;
  color: #fff;
  font-size: 12px;
  font-weight: 700;
  line-height: 16px;
  text-align: center;
}

.editor-body {
  padding: 17px 18px;
  color: #aaa;
}

.scrollbar {
  width: 15px;
  flex: none;
  background: #f1f1f1;
  display: flex;
  flex-direction: column;
  align-items: center;
  position: relative;
}

.sb-up {
  margin-top: 5px;
  border-left: 4px solid transparent;
  border-right: 4px solid transparent;
  border-bottom: 5px solid #555;
}

.sb-thumb {
  width: 11px;
  height: 251px;
  margin-top: 355px;
  margin-left: 2px;
  background: #c1c1c1;
}

.sb-down {
  margin-top: auto;
  margin-bottom: 5px;
  border-left: 4px solid transparent;
  border-right: 4px solid transparent;
  border-top: 5px solid #555;
}

/* sticky header */
.sticky-head {
  position: absolute;
  left: 0;
  top: 0;
  width: 1585px;
  height: 47px;
  background: rgba(255, 255, 255, .95);
  border-top: 1px solid #c8c8c8;
  box-shadow: 0 4px 12px rgba(0, 0, 0, .28);
  padding-left: 323px;
  display: flex;
  align-items: center;
}

.refresh {
  margin-right: 3px;
  margin-top: -1px;
}

.ticket-no {
  margin: -3px 0 0;
  font-size: 20px;
  color: #184e81;
  width: 500px;
  letter-spacing: -.05px;
}

.actions {
  display: flex;
  margin-top: -1px;
}

.act {
  height: 26px;
  border: 1px solid #bbb;
  border-radius: 4px;
  background: #fff;
  display: flex;
  align-items: center;
  justify-content: center;
  color: #000;
  fill: #000;
}

.act-reply { width: 36px; margin-right: 12px; }
.act-doc { width: 33px; margin-right: 12px; }
.act-flag { width: 54px; margin-right: 9px; }
.act-user { width: 51px; margin-right: 8px; }
.act-share { width: 36px; margin-right: 9px; }
.act-print { width: 52px; margin-right: 8px; }
.act-edit { width: 37px; margin-right: 9px; }
.act-cog { width: 53px; }

.act-main {
  flex: 1;
  height: 100%;
  display: flex;
  align-items: center;
  justify-content: center;
  border-right: 1px solid #bbb;
}

.act-gray {
  color: #555;
  fill: #555;
}

.act-more {
  width: 23px;
  display: flex;
  justify-content: center;
}

.act-more i {
  border-left: 4px solid transparent;
  border-right: 4px solid transparent;
  border-top: 5px solid #555;
}

.to-top {
  position: absolute;
  left: 1530px;
  top: -1px;
  width: 35px;
  height: 35px;
  background: #e2e2e2;
  border: 1px dotted #999;
  border-top: 0;
  border-radius: 0 0 4px 4px;
  display: flex;
  align-items: center;
  justify-content: center;
}

/* ubuntu dock */
.dock {
  height: 44px;
  flex: none;
  background: #23161f;
  display: flex;
  align-items: center;
  padding-right: 16px;
}

.dock-app {
  width: 40px;
  height: 40px;
  margin: 0 4px;
  flex: none;
  display: flex;
  align-items: center;
  justify-content: center;
  border-radius: 4px;
  position: relative;
}

.dock-active {
  background: #453c44;
}

.has-dot::after {
  content: "";
  position: absolute;
  left: 18px;
  bottom: 0;
  width: 4px;
  height: 4px;
  border-radius: 50%;
  background: #e95420;
}

.ij-box {
  width: 23px;
  height: 23px;
  border: 2px solid #2f7fe8;
  border-left-color: #d03a8a;
  border-top-color: #b03aa8;
  background: #000;
  color: #fff;
  font-size: 9px;
  line-height: 10px;
  padding-left: 3px;
  display: block;
}

.ij-box i {
  display: block;
  width: 7px;
  height: 1px;
  margin-top: 4px;
  background: #fff;
}

.skype-box {
  width: 23px;
  height: 23px;
  border-radius: 50% 45% 50% 45%;
  background: #0a9ee0;
  color: #fff;
  font-size: 16px;
  font-weight: 700;
  line-height: 23px;
  text-align: center;
}

.app-grid {
  margin-left: auto;
}
```
